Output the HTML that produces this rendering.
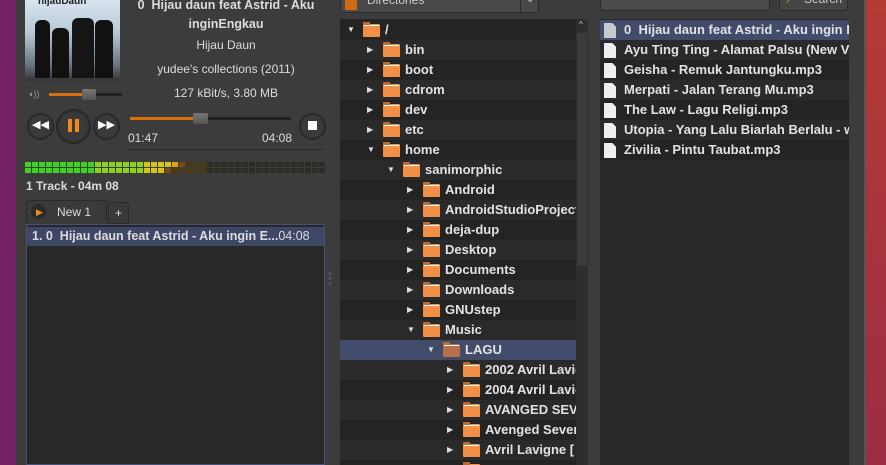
<!DOCTYPE html><html><head><meta charset="utf-8"><style>
*{margin:0;padding:0;box-sizing:border-box}
body{width:886px;height:465px;overflow:hidden;background:#3c3c3c;font-family:"Liberation Sans","DejaVu Sans",sans-serif;color:#dcdcdc;position:relative}
.a{position:absolute}
.b{font-weight:bold}
.row{position:absolute;height:20px;font-size:13px;font-weight:bold;line-height:20px;color:#e2e2e2;white-space:nowrap}
.fold{position:absolute;top:4px;width:17px;height:13px;background:#f39048;border-radius:1px}
.fold:before{content:"";position:absolute;left:0;top:-2px;width:7px;height:3px;background:#c06a2e}
.fold:after{content:"";position:absolute;left:1px;top:1px;width:15px;height:1px;background:#fff}
.arr{position:absolute;top:0;font-size:8px;color:#ddd}
.doc{position:absolute;top:3px;width:12px;height:15px;background:#eee;left:4px;clip-path:polygon(0 0,70% 0,100% 25%,100% 100%,0 100%)}
.btn{position:absolute;border-radius:50%;background:radial-gradient(circle,#3a3a3a 55%,#222 70%,#2d2d2d 100%)}
</style></head><body>
<div class="a" style="left:0;top:0;width:16px;height:465px;background:#762266"></div>
<div class="a" style="left:866px;top:0;width:20px;height:465px;background:linear-gradient(#b43a34,#9c2d44)"></div>
<div class="a" style="left:864px;top:0;width:2px;height:465px;background:#555"></div>

<div class="a" style="left:25px;top:0;width:95px;height:81px;background:linear-gradient(#d8e4ee,#b9c9d8 40%,#6a7480 80%,#333)"></div>
<div class="a" style="left:35px;top:20px;width:15px;height:58px;background:#111;border-radius:6px 6px 0 0"></div>
<div class="a" style="left:52px;top:28px;width:17px;height:50px;background:#111;border-radius:6px 6px 0 0"></div>
<div class="a" style="left:72px;top:18px;width:22px;height:60px;background:#151515;border-radius:6px 6px 0 0"></div>
<div class="a" style="left:95px;top:20px;width:18px;height:58px;background:#111;border-radius:6px 6px 0 0"></div>
<div class="a b" style="left:38px;top:-4px;font-size:10px;color:#222">hijauDaun</div>

<div class="a b" style="left:128px;top:-4px;width:196px;text-align:center;font-size:12.5px;line-height:19px">0 &nbsp;Hijau daun feat Astrid - Aku inginEngkau</div>
<div class="a" style="left:128px;top:38px;width:196px;text-align:center;font-size:12px">Hijau Daun</div>
<div class="a" style="left:128px;top:62px;width:196px;text-align:center;font-size:12px">yudee's collections (2011)</div>
<div class="a" style="left:128px;top:86px;width:196px;text-align:center;font-size:12px">127 kBit/s, 3.80 MB</div>

<div class="a" style="left:28px;top:89px;font-size:9px;color:#999">◖))</div>
<div class="a" style="left:49px;top:93px;width:73px;height:3px;background:#222"></div>
<div class="a" style="left:49px;top:93px;width:35px;height:3px;background:#d4700d"></div>
<div class="a" style="left:82px;top:89px;width:14px;height:11px;background:linear-gradient(#777,#555);border-radius:2px"></div>

<div class="btn" style="left:27px;top:113px;width:27px;height:27px"></div>
<div class="a b" style="left:32px;top:118px;font-size:11px;color:#fff">◀◀</div>
<div class="btn" style="left:56px;top:109px;width:35px;height:35px"></div>
<div class="a" style="left:68px;top:119px;width:4px;height:13px;background:#f08a1c"></div>
<div class="a" style="left:75px;top:119px;width:4px;height:13px;background:#f08a1c"></div>
<div class="btn" style="left:93px;top:113px;width:27px;height:27px"></div>
<div class="a b" style="left:98px;top:118px;font-size:11px;color:#fff">▶▶</div>
<div class="a" style="left:130px;top:117px;width:161px;height:3px;background:#222"></div>
<div class="a" style="left:130px;top:117px;width:65px;height:3px;background:#d4700d"></div>
<div class="a" style="left:193px;top:113px;width:15px;height:11px;background:linear-gradient(#777,#555);border-radius:2px"></div>
<div class="a" style="left:128px;top:131px;font-size:12px">01:47</div>
<div class="a" style="left:262px;top:131px;font-size:12px">04:08</div>
<div class="btn" style="left:299px;top:113px;width:27px;height:27px"></div>
<div class="a" style="left:308px;top:121px;width:9px;height:9px;background:#fff"></div>
<div class="a" style="left:128px;top:149px;width:196px;height:1px;background:#2a2a2a"></div>

<div class="a" id="vu" style="left:25px;top:162px;width:301px;height:11px"></div>

<div class="a b" style="left:26px;top:179px;font-size:12px">1 Track - 04m 08</div>
<div class="a" style="left:26px;top:200px;width:81px;height:24px;background:#3a3a3a;border:1px solid #2a2a2a;border-bottom:none;border-radius:3px 3px 0 0"></div>
<div class="a" style="left:31px;top:204px;width:15px;height:15px;border-radius:50%;background:#2a2a2a"></div>
<div class="a" style="left:36px;top:207px;font-size:9px;color:#f08a1c">▶</div>
<div class="a" style="left:57px;top:205px;font-size:12px">New 1</div>
<div class="a" style="left:108px;top:202px;width:21px;height:22px;background:#3a3a3a;border:1px solid #2a2a2a;border-radius:3px 3px 0 0;text-align:center;font-size:12px;line-height:20px">+</div>
<div class="a" style="left:26px;top:224px;width:299px;height:241px;background:#282828;border:1px solid #46507a"></div>
<div class="a b" style="left:27px;top:227px;width:297px;height:19px;background:#3f4766;font-size:12.5px;line-height:19px;padding-left:5px;white-space:nowrap;overflow:hidden">1. 0 &nbsp;Hijau daun feat Astrid - Aku ingin E...<span style="font-weight:normal">04:08</span></div>
<div class="a" style="left:328px;top:271px;width:4px;height:14px;background:radial-gradient(circle,#555 1px,transparent 2px) 0 0/4px 5px"></div>

<div class="a" style="left:340px;top:-6px;width:199px;height:19px;background:#484848;border:1px solid #2a2a2a;border-radius:3px"></div>
<div class="a" style="left:345px;top:-4px;width:12px;height:14px;background:#d06a10"></div>
<div class="a" style="left:367px;top:-7px;font-size:12px;color:#ccc">Directories</div>
<div class="a" style="left:520px;top:-6px;width:1px;height:18px;background:#2a2a2a"></div>
<div class="a" style="left:526px;top:-6px;font-size:10px;color:#ccc">⌄</div>

<div class="a" style="left:340px;top:19px;width:236px;height:446px;background:#242424;overflow:hidden" id="tree"></div>
<div class="a" style="left:576px;top:19px;width:12px;height:446px;background:#2e2e2e"></div>
<div class="a" style="left:577px;top:33px;width:10px;height:233px;background:#3c3c3c"></div>
<div class="a" style="left:579px;top:20px;font-size:8px;color:#ccc">^</div>

<div class="a" style="left:600px;top:-6px;width:170px;height:17px;background:#4a4a4a;border:1px solid #2a2a2a;border-radius:3px"></div>
<div class="a" style="left:779px;top:-6px;width:69px;height:17px;background:#454545;border:1px solid #2a2a2a;border-radius:3px"></div>
<div class="a" style="left:786px;top:-8px;font-size:12px;color:#e8a040">⟋</div>
<div class="a" style="left:804px;top:-8px;font-size:12px;color:#ccc">Search</div>
<div class="a" style="left:600px;top:19px;width:249px;height:446px;background:#282828;overflow:hidden" id="files"></div>

<script>
var vu=document.getElementById('vu'),h='';
for(var r=0;r<2;r++)for(var i=0;i<43;i++){var x=i*7,lit=r==0?22:20,c;
var g=i<10?'#3cd21e':i<17?'#8fd21a':i<24?'#d7c515':'#e08a10';
if(i>=lit){c=i<lit+1?'#7a4a10':i<26?'#4a3a18':'#2e2a26';}else c=(r==0&&i==21)?'#e0a010':g;
h+='<div style="position:absolute;left:'+x+'px;top:'+(r*6)+'px;width:6px;height:5px;background:'+c+'"></div>';}
vu.innerHTML=h;
var T=[[0,'/',1],[1,'bin'],[1,'boot'],[1,'cdrom'],[1,'dev'],[1,'etc'],[1,'home',1],[2,'sanimorphic',1],[3,'Android'],[3,'AndroidStudioProjects'],[3,'deja-dup'],[3,'Desktop'],[3,'Documents'],[3,'Downloads'],[3,'GNUstep'],[3,'Music',1],[4,'LAGU',1],[5,'2002 Avril Lavigne'],[5,'2004 Avril Lavigne'],[5,'AVANGED SEVENFOLD'],[5,'Avenged Sevenfold'],[5,'Avril Lavigne ['],[5,'']];
var s='';T.forEach(function(e,k){var y=1+k*20,l=e[0]*20,sel=k==16;
var bg=sel?'#434b6b':(k%2?'#2a2a2a':'#242424');
s+='<div class="row" style="left:0;top:'+y+'px;width:236px;background:'+bg+'">'+
'<span class="arr" style="left:'+(7+l)+'px">'+(e[2]?'▼':'▶')+'</span>'+
'<span class="fold" style="left:'+(23+l)+'px;'+(sel?'background:#b87048':'')+'"></span>'+
'<span style="position:absolute;left:'+(45+l)+'px">'+e[1]+'</span></div>';});
document.getElementById('tree').innerHTML=s;
var F=['0 &nbsp;Hijau daun feat Astrid - Aku ingin Engkau','Ayu Ting Ting - Alamat Palsu (New Version)','Geisha - Remuk Jantungku.mp3','Merpati - Jalan Terang Mu.mp3','The Law - Lagu Religi.mp3','Utopia - Yang Lalu Biarlah Berlalu - www','Zivilia - Pintu Taubat.mp3'];
s='';F.forEach(function(f,k){var bg=k==0?'#434b6b':(k%2?'#2a2a2a':'#242424');
s+='<div class="row" style="left:0;top:'+(1+k*20)+'px;width:249px;background:'+bg+'"><span class="doc" style="'+(k==0?'background:#c8c8d0':'')+'"></span><span style="position:absolute;left:24px">'+f+'</span></div>';});
document.getElementById('files').innerHTML=s;
</script>
</body></html>
